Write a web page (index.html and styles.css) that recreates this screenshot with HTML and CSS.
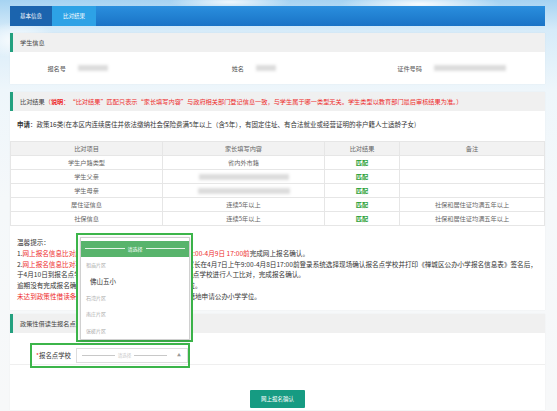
FILE: index.html
```html
<!DOCTYPE html>
<html lang="zh-CN">
<head>
  <meta charset="UTF-8" />
  <meta name="viewport" content="width=device-width, initial-scale=1.0"/>
  <title>比对结果</title>
  <link rel="stylesheet" href="styles.css">
</head>
<body>
  <div class="page">
    <div class="tabs">
      <span class="tab">基本信息</span>
      <span class="tab active">比对结果</span>
    </div>

    <div class="section">
      <div class="sec-head">学生信息</div>
      <div class="info-row">
        <div class="info"><span class="info-label">报名号</span><span class="blur" style="width:30px"></span></div>
        <div class="info"><span class="info-label">姓名</span><span class="blur" style="width:20px"></span></div>
        <div class="info"><span class="info-label">证件号码</span><span class="blur" style="width:72px"></span></div>
      </div>
    </div>

    <div class="section">
      <div class="sec-head">比对结果<span class="warn">（<b>说明</b>：“比对结果”匹配只表示“家长填写内容”与政府相关部门登记信息一致，与学生属于哪一类型无关。学生类型以教育部门最后审核结果为准。）</span></div>
      <div class="sec-body">
        <p class="apply"><b>申请</b>：政策16类(在本区内连续居住并依法缴纳社会保险费满5年以上（含5年），有固定住址、有合法就业或经营证明的非户籍人士适龄子女)</p>
        <table class="compare">
          <tr><th>比对项目</th><th>家长填写内容</th><th>比对结果</th><th>备注</th></tr>
          <tr><td>学生户籍类型</td><td>省内外市籍</td><td class="ok">匹配</td><td></td></tr>
          <tr><td>学生父亲</td><td><span class="blur" style="width:90px"></span></td><td class="ok">匹配</td><td></td></tr>
          <tr><td>学生母亲</td><td><span class="blur" style="width:92px"></span></td><td class="ok">匹配</td><td></td></tr>
          <tr><td>居住证信息</td><td>连续5年以上</td><td class="ok">匹配</td><td>社保和居住证均满五年以上</td></tr>
          <tr><td>社保信息</td><td>连续5年以上</td><td class="ok">匹配</td><td>社保和居住证均满五年以上</td></tr>
        </table>
        <div class="tips">
          <div>温馨提示：</div>
          <div>1.<span class="red">网上报名信息比对成功（均匹配）的，请于2020年4月8日9:00-4月9日 17:00前</span>完成网上报名确认。</div>
          <div>2.<span class="red">网上报名信息比对不成功（有一项或多项不匹配）的，</span>请家长在4月7日上午9:00-4月8日17:00前登录系统选择现场确认报名点学校并打印《禅城区公办小学报名信息表》签名后，</div>
          <div>于4月10日到报名点学校提交相关资料原件及复印件，由报名点学校进行人工比对，完成报名确认。</div>
          <div>逾期没有完成报名确认的，视为自动放弃本区政策性借读学位。</div>
          <div><span class="red">未达到政策性借读条件的学生，不能办理借读手续，</span>请回户籍地申请公办小学学位。</div>
        </div>
      </div>
    </div>

    <div class="section">
      <div class="sec-head">政策性借读生报名点学校</div>
      <div class="form-row">
        <div class="field">
          <span class="field-label"><i>*</i>报名点学校</span>
          <div class="select"><span class="placeholder">请选择</span><span class="arrow">▲</span></div>
          <div class="dropdown">
            <div class="menu">
              <div class="menu-head"><span class="placeholder">请选择</span></div>
              <div class="group">祖庙片区</div>
              <div class="option">佛山五小</div>
              <div class="group">石湾片区</div>
              <div class="group">南庄片区</div>
              <div class="group">张槎片区</div>
            </div>
          </div>
        </div>
      </div>
      <div class="actions">
        <button class="btn">网上报名确认</button>
      </div>
    </div>
  </div>
</body>
</html>
```

FILE: styles.css
```css
html, body {
  height: 100%;
}
body {
  margin: 0;
  font-family: "Noto Sans CJK SC", "Liberation Sans", sans-serif;
  color: #333;
  background:
    radial-gradient(ellipse 40px 18px at 18px 40px, rgba(255,255,255,0.9), rgba(255,255,255,0)),
    radial-gradient(ellipse 80px 10px at 420px 4px, rgba(255,255,255,0.9), rgba(255,255,255,0)),
    radial-gradient(ellipse 60px 8px at 230px 2px, rgba(255,255,255,0.8), rgba(255,255,255,0)),
    linear-gradient(to bottom, #a6d3f2 0, #d6ebf9 30px, #eef6fb 90px, #f5f8fa 200px, #f7f8f9 100%);
  overflow: hidden;
}
.page {
  width: 535px;
  padding: 6px 0 0 10px;
}
.tabs {
  height: 20px;
  display: flex;
  background: linear-gradient(to bottom, #2a8fde, #1a73c6);
}
.tab {
  color: #fff;
  font-size: 5.5px;
  line-height: 20px;
  width: 42px;
  text-align: center;
  background: #1b64ae;
}
.tab.active {
  width: 44px;
  background: #2da2e6;
}
.section {
  margin-top: 7px;
  background: #fff;
  box-shadow: 0 0 1px rgba(0,0,0,0.08);
}
.section + .section {
  margin-top: 8px;
}
.section:last-child {
  margin-top: 4px;
}
.sec-head {
  height: 19px;
  line-height: 19px;
  background: #f0f0f0;
  border-left: 3px solid #24a07f;
  padding-left: 7px;
  font-size: 6.2px;
  color: #444;
  white-space: nowrap;
}
.warn {
  color: #ee2b2b;
}
.info-row {
  height: 32px;
  display: grid;
  grid-template-columns: 178px 178px 179px;
  align-items: center;
}
.info {
  display: flex;
  align-items: center;
  gap: 12px;
  font-size: 6.2px;
  color: #555;
}
.info-label {
  width: 56px;
  text-align: right;
}
.blur {
  display: inline-block;
  height: 6px;
  background: #dcdcdc;
  filter: blur(1.5px);
  vertical-align: middle;
}
.sec-body {
  padding: 8px 0 8px;
}
.apply {
  margin: 0;
  padding-left: 7px;
  font-size: 6.5px;
  line-height: 11px;
  white-space: nowrap;
}
.compare {
  width: 100%;
  margin-top: 11px;
  border-collapse: collapse;
  font-size: 6.2px;
  color: #666;
}
.compare th, .compare td {
  height: 13px;
  padding: 0;
  border: 1px solid #e6e6e6;
  text-align: center;
  font-weight: normal;
}
.compare th {
  background: #f2f2f2;
}
.compare th:nth-child(1) { width: 151px; }
.compare th:nth-child(2) { width: 161px; }
.compare th:nth-child(3) { width: 74px; }
.compare .ok {
  color: #1f9e33;
  font-weight: bold;
}
.tips {
  margin-top: 11px;
  padding-left: 7px;
  font-size: 6.6px;
  line-height: 10.8px;
  white-space: nowrap;
}
.red {
  color: #ee2b2b;
}
.form-row {
  height: 32px;
  border-bottom: 1px solid #efefef;
  padding: 6px 0 0 20px;
  box-sizing: border-box;
}
.field {
  position: relative;
  display: inline-flex;
  align-items: center;
  gap: 5px;
  border: 2px solid #3cb54a;
  padding: 3px 0 3px 4px;
}
.field-label {
  font-size: 6.4px;
  width: 35px;
  white-space: nowrap;
}
.field-label i {
  color: #ee2b2b;
  font-style: normal;
}
.select {
  position: relative;
  width: 85px;
  height: 13px;
  border: 1px solid #ddd;
  font-size: 4.5px;
  color: #c8c8c8;
  display: flex;
  align-items: center;
  padding: 0 20px 0 5px;
}
.placeholder {
  flex: 1;
  display: flex;
  align-items: center;
  gap: 3px;
}
.placeholder::before,
.placeholder::after {
  content: "";
  flex: 1;
  height: 0;
  border-top: 1px solid currentColor;
}
.arrow {
  position: absolute;
  right: 6px;
  top: 4px;
  font-size: 4px;
  line-height: 5px;
  color: #999;
}
.dropdown {
  position: absolute;
  left: 44px;
  bottom: calc(100% + 3px);
  width: 117px;
  height: 109px;
  box-sizing: border-box;
  border: 2px solid #3cb54a;
  padding: 2px 1px 0 2px;
  background: #fff;
}
.menu {
  height: 100%;
  box-sizing: border-box;
  background: #fff;
  border: 1px solid #d0d0d0;
  padding-top: 3px;
  overflow: hidden;
  box-shadow: 0 1px 3px rgba(0,0,0,0.15);
}
.menu-head {
  height: 16px;
  background: #58b46c;
  color: #fff;
  font-size: 5px;
  display: flex;
  align-items: center;
  padding: 0 5px;
  margin: 0 -1px;
}
.menu-head .placeholder::before,
.menu-head .placeholder::after {
  border-top-color: rgba(255,255,255,0.85);
}
.group {
  line-height: 16.5px;
  font-size: 5px;
  color: #aaa;
  padding-left: 5px;
}
.option {
  line-height: 16.5px;
  font-size: 6.5px;
  color: #333;
  padding-left: 9px;
}
.actions {
  height: 45px;
  padding-top: 17px;
  box-sizing: border-box;
  text-align: center;
}
.btn {
  height: 18px;
  width: 55px;
  border: none;
  padding: 0;
  background: #169b82;
  color: #fff;
  font-family: inherit;
  font-size: 5.5px;
  border-radius: 1px;
}
```
